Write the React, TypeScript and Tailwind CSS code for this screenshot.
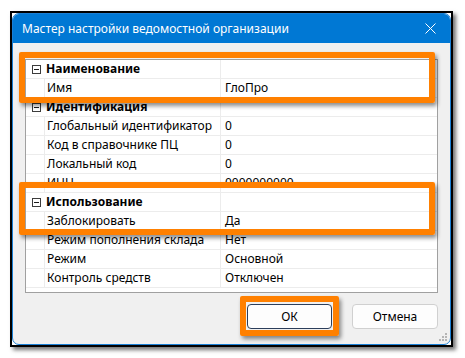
import React from "react";

type Row =
  | { kind: "cat"; label: string }
  | { kind: "prop"; label: string; value: string };

const rows: Row[] = [
  { kind: "cat", label: "Наименование" },
  { kind: "prop", label: "Имя", value: "ГлоПро" },
  { kind: "cat", label: "Идентификация" },
  { kind: "prop", label: "Глобальный идентификатор", value: "0" },
  { kind: "prop", label: "Код в справочнике ПЦ", value: "0" },
  { kind: "prop", label: "Локальный код", value: "0" },
  { kind: "prop", label: "ИНН", value: "0000000000" },
  { kind: "cat", label: "Использование" },
  { kind: "prop", label: "Заблокировать", value: "Да" },
  { kind: "prop", label: "Режим пополнения склада", value: "Нет" },
  { kind: "prop", label: "Режим", value: "Основной" },
  { kind: "prop", label: "Контроль средств", value: "Отключен" },
];

function Minus() {
  return (
    <div className="w-[9px] h-[9px] border border-[#3c3c3c] flex items-center justify-center bg-white">
      <div className="w-[5px] h-px bg-[#1c1c1c]" />
    </div>
  );
}

function GridRow({ row }: { row: Row }) {
  return (
    <div className="flex h-[19px] border-b border-[#ececec]">
      <div className="w-[18px] shrink-0 flex items-center justify-center pl-[2px]">
        {row.kind === "cat" ? <Minus /> : null}
      </div>
      <div
        className={
          "w-[177px] shrink-0 flex items-center pl-[2px] border-r border-[#ececec] " +
          (row.kind === "prop" ? "border-l border-l-[#ececec]" : "") +
          (row.kind === "cat" ? " font-bold" : "")
        }
      >
        {row.label}
      </div>
      <div className="flex-1 flex items-center pl-[4px]">
        {row.kind === "prop" ? row.value : ""}
      </div>
    </div>
  );
}

export default function App() {
  return (
    <div
      className="relative w-[465px] h-[358px] bg-white text-[12px] text-black"
      style={{ fontFamily: '"Noto Sans", "Open Sans", sans-serif' }}
    >
      <div className="pl-[10px] pt-[11px]">
        <div className="w-[443px] h-[336px] border-2 border-black bg-white shadow-[3px_3px_4px_rgba(0,0,0,0.55)]">
          <div className="h-full flex flex-col rounded-[7px] border border-[#1a7fd4] bg-[#f0f0f0] overflow-hidden">
            <div className="h-[29px] shrink-0 bg-[#0078d4] flex items-center pl-[9px] pr-[10px] text-white">
              <span className="flex-1">Мастер настройки ведомостной организации</span>
              <svg width="11" height="11" viewBox="0 0 11 11" className="mr-[4px]">
                <path d="M0.5 0.5 L10.5 10.5 M10.5 0.5 L0.5 10.5" stroke="white" strokeWidth="1" />
              </svg>
            </div>
            <div className="flex-1 flex flex-col pl-[12px] pt-[16px] relative">
              <div className="w-[413px] h-[234px] border border-[#a0a0a0] bg-white">
                {rows.map((r, i) => (
                  <GridRow key={i} row={r} />
                ))}
              </div>
              <div className="flex gap-[20px] mt-[11px] pl-[222px]">
                <button className="w-[85px] h-[25px] rounded-[4px] border border-[#2c3e5a] bg-[#fdfdfd] flex items-center justify-center">
                  ОК
                </button>
                <button className="w-[86px] h-[25px] rounded-[4px] border border-[#d0d0d0] bg-[#fdfdfd] flex items-center justify-center">
                  Отмена
                </button>
              </div>
              <svg width="8" height="8" viewBox="0 0 8 8" className="absolute right-[3px] bottom-[3px]">
                <rect x="6" y="0" width="2" height="2" fill="#b5b5b5" />
                <rect x="3" y="3" width="2" height="2" fill="#b5b5b5" />
                <rect x="6" y="3" width="2" height="2" fill="#b5b5b5" />
                <rect x="0" y="6" width="2" height="2" fill="#b5b5b5" />
                <rect x="3" y="6" width="2" height="2" fill="#b5b5b5" />
                <rect x="6" y="6" width="2" height="2" fill="#b5b5b5" />
              </svg>
            </div>
          </div>
        </div>
      </div>

      {/* annotation highlight boxes */}
      <div className="absolute left-[19px] top-[52px] w-[416px] h-[51px] border-[6px] border-[#ff8000] rounded-[2px] shadow-[2px_3px_4px_rgba(0,0,0,0.45)]" />
      <div className="absolute left-[19px] top-[182px] w-[416px] h-[53px] border-[6px] border-[#ff8000] rounded-[2px] shadow-[2px_3px_4px_rgba(0,0,0,0.45)]" />
      <div className="absolute left-[240px] top-[296px] w-[99px] h-[40px] border-[6px] border-[#ff8000] rounded-[2px] shadow-[2px_3px_4px_rgba(0,0,0,0.45)]" />
    </div>
  );
}
